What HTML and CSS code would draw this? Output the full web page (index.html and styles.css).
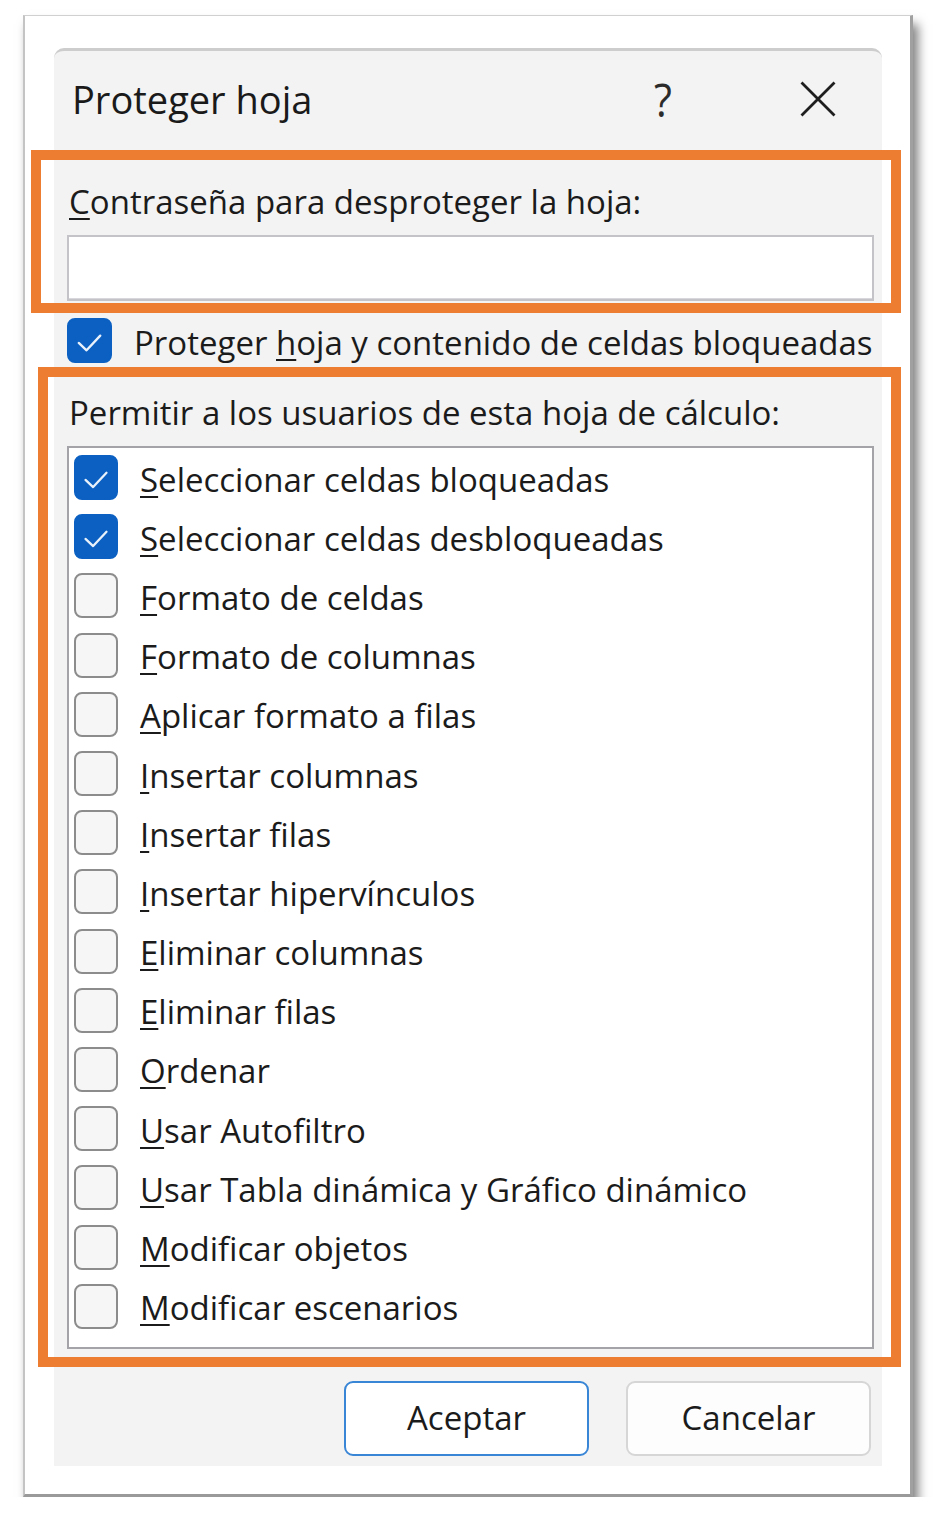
FILE: index.html
```html
<!DOCTYPE html>
<html lang="es">
<head>
<meta charset="utf-8">
<title>Proteger hoja</title>
<link rel="stylesheet" href="styles.css">
</head>
<body>
<div class="frame">
  <div class="dialog">
    <div class="titlebar">
      <div class="title">Proteger hoja</div>
      <div class="tb-btn help">?</div>
      <div class="tb-btn close">
        <svg width="36" height="36" viewBox="0 0 36 36"><path d="M1.5 1.5 L34.5 34.5 M34.5 1.5 L1.5 34.5" stroke="#1e1e1e" stroke-width="2.8" fill="none"/></svg>
      </div>
    </div>
    <div class="label pw-label"><u>C</u>ontraseña para desproteger la hoja:</div>
    <div class="input"></div>
    <div class="check-row main-check">
      <span class="cb checked"><svg viewBox="0 0 44 44" width="44" height="44"><path d="M11 24 L19 31.5 L33 16.5" stroke="#e9f1fb" stroke-width="2.4" fill="none" stroke-linecap="round" stroke-linejoin="round"/></svg></span>
      <span class="cb-text">Proteger <u>h</u>oja y contenido de celdas bloqueadas</span>
    </div>
    <div class="label allow-label">Permitir a los usuarios de esta hoja de cálculo:</div>
    <div class="listbox">
      <div class="item"><span class="cb checked"><svg viewBox="0 0 44 44" width="44" height="44"><path d="M11 24 L19 31.5 L33 16.5" stroke="#e9f1fb" stroke-width="2.4" fill="none" stroke-linecap="round" stroke-linejoin="round"/></svg></span><span class="cb-text"><u>S</u>eleccionar celdas bloqueadas</span></div>
      <div class="item"><span class="cb checked"><svg viewBox="0 0 44 44" width="44" height="44"><path d="M11 24 L19 31.5 L33 16.5" stroke="#e9f1fb" stroke-width="2.4" fill="none" stroke-linecap="round" stroke-linejoin="round"/></svg></span><span class="cb-text"><u>S</u>eleccionar celdas desbloqueadas</span></div>
      <div class="item"><span class="cb"></span><span class="cb-text"><u>F</u>ormato de celdas</span></div>
      <div class="item"><span class="cb"></span><span class="cb-text"><u>F</u>ormato de columnas</span></div>
      <div class="item"><span class="cb"></span><span class="cb-text"><u>A</u>plicar formato a filas</span></div>
      <div class="item"><span class="cb"></span><span class="cb-text"><u>I</u>nsertar columnas</span></div>
      <div class="item"><span class="cb"></span><span class="cb-text"><u>I</u>nsertar filas</span></div>
      <div class="item"><span class="cb"></span><span class="cb-text"><u>I</u>nsertar hipervínculos</span></div>
      <div class="item"><span class="cb"></span><span class="cb-text"><u>E</u>liminar columnas</span></div>
      <div class="item"><span class="cb"></span><span class="cb-text"><u>E</u>liminar filas</span></div>
      <div class="item"><span class="cb"></span><span class="cb-text"><u>O</u>rdenar</span></div>
      <div class="item"><span class="cb"></span><span class="cb-text"><u>U</u>sar Autofiltro</span></div>
      <div class="item"><span class="cb"></span><span class="cb-text"><u>U</u>sar Tabla dinámica y Gráfico dinámico</span></div>
      <div class="item"><span class="cb"></span><span class="cb-text"><u>M</u>odificar objetos</span></div>
      <div class="item"><span class="cb"></span><span class="cb-text"><u>M</u>odificar escenarios</span></div>
    </div>
    <div class="buttons">
      <div class="btn primary">Aceptar</div>
      <div class="btn">Cancelar</div>
    </div>
  </div>
  <div class="mark mark-pw"></div>
  <div class="mark mark-list"></div>
</div>
</body>
</html>
```

FILE: styles.css
```css
* { box-sizing: border-box; }

html, body {
  margin: 0;
  padding: 0;
  background: #ffffff;
}

body {
  font-family: "Open Sans", "Noto Sans", "DejaVu Sans", sans-serif;
  color: #1b1b1b;
}

.frame {
  position: relative;
  margin: 15px 0 0 23px;
  width: 890px;
  height: 1482px;
  background: #ffffff;
  border: 1px solid #d0d0d0;
  border-left: 2px solid #c4c4c4;
  border-right: 3px solid #a0a0a0;
  border-bottom: 3px solid #9a9a9a;
  box-shadow: 5px 9px 10px rgba(0, 0, 0, 0.5);
  padding: 32px 30px 0 29px;
}

.dialog {
  width: 828px;
  height: 1418px;
  background: #f3f3f3;
  border-top: 3px solid #cdcdcd;
  border-radius: 10px 10px 0 0;
  padding: 0 8px 0 13px;
  display: flex;
  flex-direction: column;
}

.titlebar {
  height: 99px;
  display: flex;
  align-items: center;
  padding-right: 34px;
  margin-right: -8px;
}

.title {
  flex: 1;
  font-size: 38px;
  line-height: 1;
  padding-left: 5px;
  color: #1a1a1a;
  margin-top: -4px;
}

.tb-btn {
  width: 60px;
  display: flex;
  justify-content: center;
  align-items: center;
}

.help {
  font-size: 46px;
  line-height: 1;
  color: #2b2b2b;
  margin-right: 95px;
  margin-top: -4px;
  transform: scaleX(0.9);
}

.close {
  margin-top: -4px;
}

.close svg { display: block; }

.label {
  font-size: 33px;
  line-height: 40px;
  padding-left: 2px;
  white-space: nowrap;
}

.pw-label { margin-top: 32px; }

u {
  text-decoration: underline;
  text-decoration-thickness: 2px;
  text-underline-offset: 4px;
}

.input {
  margin-top: 13px;
  height: 66px;
  background: #ffffff;
  border: 2px solid #c3c3c8;
  box-shadow: inset 0 -1px 0 #d8d8dc;
}

.check-row {
  display: flex;
  align-items: center;
  height: 45px;
  margin-top: 17px;
}

.cb {
  flex: none;
  width: 45px;
  height: 45px;
  border-radius: 8px;
  background: #f6f6f6;
  border: 2px solid #8c8c8c;
  display: flex;
}

.cb.checked {
  background: #0b60c2;
  border-color: #0b60c2;
}

.cb svg {
  display: block;
  margin: -1px;
}

.cb-text {
  font-size: 33px;
  line-height: 40px;
  white-space: nowrap;
  margin-left: 22px;
  padding-top: 4px;
}

.allow-label { margin-top: 30px; }

.listbox {
  margin-top: 13px;
  height: 903px;
  background: #ffffff;
  border: 2px solid #a3a3a8;
  padding: 0 0 0 5px;
  display: flex;
  flex-direction: column;
}

.item {
  height: 59.2px;
  display: flex;
  align-items: center;
}

.item .cb {
  width: 44px;
}

.buttons {
  margin-top: 32px;
  display: flex;
  justify-content: flex-end;
  gap: 37px;
  padding-right: 3px;
}

.btn {
  width: 245px;
  height: 75px;
  border-radius: 9px;
  border: 2px solid #d6d6d6;
  background: #fdfdfd;
  font-size: 33px;
  display: flex;
  align-items: center;
  justify-content: center;
  color: #1b1b1b;
  padding-bottom: 2px;
}

.btn.primary {
  border-color: #3a86d6;
  background: #ffffff;
}

.mark {
  position: absolute;
  border: 10px solid #ed7d31;
}

.mark-pw {
  left: 6px;
  top: 134px;
  width: 870px;
  height: 163px;
}

.mark-list {
  left: 13px;
  top: 351px;
  width: 863px;
  height: 1000px;
}
```
